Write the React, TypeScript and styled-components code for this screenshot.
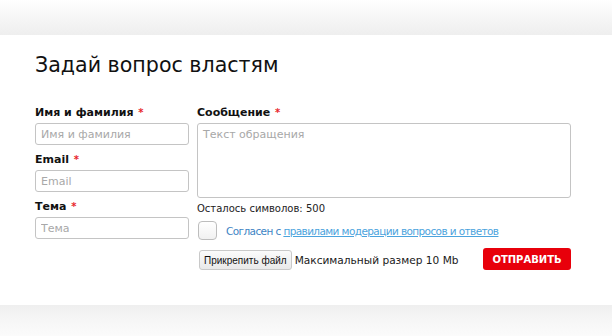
import React from 'react';
import styled, { createGlobalStyle } from 'styled-components';

const GlobalStyle = createGlobalStyle`
    html, body {
        margin: 0;
        padding: 0;
        background: #ffffff;
        font-family: "DejaVu Sans", Verdana, sans-serif;
        color: #1a1a1a;
    }
`

function App() {
    return (
        <Page>
            <GlobalStyle/>
            <TopBand/>
            <Card>
                <Title>Задай вопрос властям</Title>
                <Form>
                    <LeftColumn>
                        <Field>
                            <Label>Имя и фамилия <Star>*</Star></Label>
                            <Input placeholder='Имя и фамилия'/>
                        </Field>
                        <Field>
                            <Label>Email <Star>*</Star></Label>
                            <Input placeholder='Email'/>
                        </Field>
                        <Field>
                            <Label>Тема <Star>*</Star></Label>
                            <Input placeholder='Тема'/>
                        </Field>
                    </LeftColumn>
                    <RightColumn>
                        <Field>
                            <Label>Сообщение <Star>*</Star></Label>
                            <TextArea placeholder='Текст обращения'/>
                        </Field>
                        <Counter>Осталось символов: 500</Counter>
                        <AgreeRow>
                            <CheckBox/>
                            <AgreeText>Согласен с <AgreeLink href='#'>правилами модерации вопросов и ответов</AgreeLink></AgreeText>
                        </AgreeRow>
                        <ActionRow>
                            <FileGroup>
                                <FileButton>Прикрепить файл</FileButton>
                                <FileHint>Максимальный размер 10 Mb</FileHint>
                            </FileGroup>
                            <SubmitButton>Отправить</SubmitButton>
                        </ActionRow>
                    </RightColumn>
                </Form>
            </Card>
            <BottomBand/>
        </Page>
    );
}

const Page = styled.div`
    width: 612px;
    height: 336px;
    display: flex;
    flex-direction: column;
    overflow: hidden;
`
const TopBand = styled.div`
    height: 35px;
    flex-shrink: 0;
    background: linear-gradient(to bottom, #ffffff 0%, #f7f7f7 45%, #eeeeee 100%);
`
const BottomBand = styled.div`
    flex: 1;
    background: linear-gradient(to bottom, #efefef 0%, #f6f6f6 50%, #fbfbfb 100%);
`
const Card = styled.div`
    height: 270px;
    flex-shrink: 0;
    box-sizing: border-box;
    padding: 17px 41px 0 35px;
    background: #ffffff;
`
const Title = styled.h1`
    margin: 0;
    font-size: 20.6px;
    font-weight: normal;
    line-height: 26px;
    color: #111111;
`
const Form = styled.div`
    display: flex;
    gap: 8px;
    margin-top: 28px;
`
const LeftColumn = styled.div`
    width: 154px;
    display: flex;
    flex-direction: column;
    gap: 8px;
`
const RightColumn = styled.div`
    flex: 1;
    display: flex;
    flex-direction: column;
`
const Field = styled.div`
    display: flex;
    flex-direction: column;
    gap: 3px;
`
const Label = styled.div`
    font-size: 11px;
    font-weight: bold;
    line-height: 14px;
    color: #111111;
`
const Star = styled.span`
    color: #e8262b;
    font-size: 10px;
    margin-left: 1px;
`
const Input = styled.input`
    box-sizing: border-box;
    width: 100%;
    height: 22px;
    padding: 0 5px;
    border: 1px solid #c4c4c4;
    border-radius: 3px;
    font-family: "DejaVu Sans", Verdana, sans-serif;
    font-size: 11px;
    outline: none;
    &::placeholder {
        color: #a8a8a8;
    }
`
const TextArea = styled.textarea`
    box-sizing: border-box;
    width: 100%;
    height: 75px;
    padding: 4px 5px;
    border: 1px solid #c4c4c4;
    border-radius: 3px;
    font-family: "DejaVu Sans", Verdana, sans-serif;
    font-size: 11px;
    resize: none;
    outline: none;
    &::placeholder {
        color: #a8a8a8;
    }
`
const Counter = styled.div`
    margin-top: 5px;
    font-size: 10px;
    line-height: 12px;
    color: #222222;
`
const AgreeRow = styled.div`
    display: flex;
    align-items: center;
    gap: 9px;
    margin-top: 6px;
    padding-left: 1px;
`
const CheckBox = styled.div`
    width: 17px;
    height: 17px;
    border: 1px solid #bdbdbd;
    border-radius: 4px;
    background: linear-gradient(to bottom, #ffffff, #f1f1f1);
`
const AgreeText = styled.span`
    font-size: 10.5px;
    letter-spacing: -0.6px;
    color: #3d84c4;
`
const AgreeLink = styled.a`
    color: #4ba3dd;
    text-decoration: underline;
`
const ActionRow = styled.div`
    display: flex;
    align-items: center;
    justify-content: space-between;
    margin-top: 8px;
`
const FileGroup = styled.div`
    display: flex;
    align-items: center;
    gap: 3px;
    padding-left: 2px;
    padding-top: 2px;
`
const FileButton = styled.button`
    height: 20px;
    padding: 0 4px;
    border: 1px solid #c9c9c9;
    border-radius: 3px;
    background: linear-gradient(to bottom, #fbfbfb, #e9e9e9);
    font-family: "Liberation Sans", Arial, sans-serif;
    font-size: 10px;
    color: #111111;
`
const FileHint = styled.span`
    font-size: 10.6px;
    color: #1a1a1a;
`
const SubmitButton = styled.button`
    height: 22px;
    width: 88px;
    border: none;
    border-radius: 3px;
    background: #e8000b;
    color: #ffffff;
    font-family: "DejaVu Sans", Verdana, sans-serif;
    font-size: 10px;
    font-weight: bold;
    text-transform: uppercase;
`

export default App;
